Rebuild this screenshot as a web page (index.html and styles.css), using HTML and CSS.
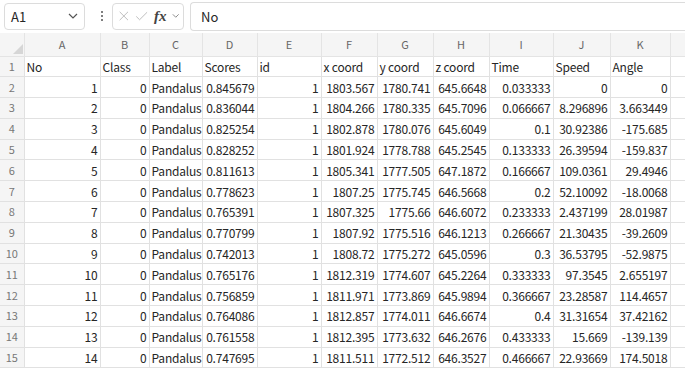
FILE: index.html
```html
<!DOCTYPE html>
<html lang="ja">
<head>
    <meta charset="UTF-8">
    <title>Sheet1</title>
    <link rel="stylesheet" href="styles.css">
</head>
<body>
    <div class="bar">
        <div class="name-box">
            <span>A1</span>
            <svg width="10" height="6" viewBox="0 0 10 6"><path d="M1 1l4 4 4-4" fill="none" stroke="#555" stroke-width="1.2"/></svg>
        </div>
        <div class="grip"><i></i><i></i><i></i></div>
        <div class="fx-box">
            <svg width="14" height="14" viewBox="0 0 14 14"><path d="M2 2l10 10M12 2L2 12" stroke="#b8b8b8" stroke-width="1.1"/></svg>
            <svg width="16" height="14" viewBox="0 0 16 14"><path d="M1.5 7.5l4 4 9-9" fill="none" stroke="#b8b8b8" stroke-width="1.1"/></svg>
            <span class="fx">fx</span>
            <svg width="9" height="6" viewBox="0 0 9 6"><path d="M1 1l3.5 3.5L8 1" fill="none" stroke="#777" stroke-width="1"/></svg>
        </div>
        <div class="formula">No</div>
    </div>
    <table class="sheet">
        <colgroup>
            <col style="width:24px"><col style="width:76px"><col style="width:49px"><col style="width:53px">
            <col style="width:55px"><col style="width:64px"><col style="width:56px"><col style="width:56px">
            <col style="width:56px"><col style="width:64px"><col style="width:57px"><col style="width:60px">
            <col style="width:15px">
        </colgroup>
        <thead>
            <tr>
                <th class="corner"><svg width="10" height="10" viewBox="0 0 10 10"><path d="M10 0v10H0z" fill="#d6d6d6"/></svg></th>
                <th>A</th><th>B</th><th>C</th><th>D</th><th>E</th><th>F</th>
                <th>G</th><th>H</th><th>I</th><th>J</th><th>K</th><th></th>
            </tr>
        </thead>
        <tbody id="rows"></tbody>
    </table>
    <script>
        var head = ['No','Class','Label','Scores','id','x coord','y coord','z coord','Time','Speed','Angle'];
        var data = [
            [1,0,'Pandalus','0.845679',1,'1803.567','1780.741','645.6648','0.033333','0','0'],
            [2,0,'Pandalus','0.836044',1,'1804.266','1780.335','645.7096','0.066667','8.296896','3.663449'],
            [3,0,'Pandalus','0.825254',1,'1802.878','1780.076','645.6049','0.1','30.92386','-175.685'],
            [4,0,'Pandalus','0.828252',1,'1801.924','1778.788','645.2545','0.133333','26.39594','-159.837'],
            [5,0,'Pandalus','0.811613',1,'1805.341','1777.505','647.1872','0.166667','109.0361','29.4946'],
            [6,0,'Pandalus','0.778623',1,'1807.25','1775.745','646.5668','0.2','52.10092','-18.0068'],
            [7,0,'Pandalus','0.765391',1,'1807.325','1775.66','646.6072','0.233333','2.437199','28.01987'],
            [8,0,'Pandalus','0.770799',1,'1807.92','1775.516','646.1213','0.266667','21.30435','-39.2609'],
            [9,0,'Pandalus','0.742013',1,'1808.72','1775.272','645.0596','0.3','36.53795','-52.9875'],
            [10,0,'Pandalus','0.765176',1,'1812.319','1774.607','645.2264','0.333333','97.3545','2.655197'],
            [11,0,'Pandalus','0.756859',1,'1811.971','1773.869','645.9894','0.366667','23.28587','114.4657'],
            [12,0,'Pandalus','0.764086',1,'1812.857','1774.011','646.6674','0.4','31.31654','37.42162'],
            [13,0,'Pandalus','0.761558',1,'1812.395','1773.632','646.2676','0.433333','15.669','-139.139'],
            [14,0,'Pandalus','0.747695',1,'1811.511','1772.512','646.3527','0.466667','22.93669','174.5018']
        ];
        var html = '<tr><th class="num">1</th>';
        for (var i = 0; i < head.length; i++) {
            html += '<td>' + head[i] + '</td>';
        }
        html += '<td></td></tr>';
        for (var r = 0; r < data.length; r++) {
            html += '<tr><th class="num">' + (r + 2) + '</th>';
            for (var c = 0; c < data[r].length; c++) {
                // 文字列は左寄せ、数値は右寄せ
                var cls = c == 2 ? '' : ' class="n"';
                html += '<td' + cls + '>' + data[r][c] + '</td>';
            }
            html += '<td></td></tr>';
        }
        document.getElementById('rows').innerHTML = html;
    </script>
</body>
</html>
```
FILE: styles.css
```css
*{
    margin: 0;
    padding: 0;
    box-sizing: border-box;
}
body{
    width: 685px;
    height: 369px;
    overflow: hidden;
    background: #fff;
    font-family: "Noto Sans CJK JP", "Noto Sans", sans-serif;
    font-size: 12px;
    color: #262626;
}
.bar{
    display: flex;
    align-items: center;
    height: 33px;
    padding: 2px 0 3px 4px;
}
.name-box{
    display: flex;
    align-items: center;
    justify-content: space-between;
    width: 81px;
    height: 27px;
    padding: 0 6px 0 6px;
    border: 1px solid #dcdcdc;
    border-radius: 4px;
    font-size: 13px;
}
.grip{
    display: flex;
    flex-direction: column;
    gap: 2px;
    margin: 0 9px 0 16px;
}
.grip i{
    width: 2px;
    height: 2px;
    background: #555;
    border-radius: 1px;
}
.fx-box{
    display: flex;
    align-items: center;
    gap: 5px;
    width: 72px;
    height: 27px;
    padding: 0 4px 0 5px;
    border: 1px solid #dcdcdc;
    border-radius: 4px;
}
.fx{
    font-family: "Liberation Serif", serif;
    font-style: italic;
    font-weight: bold;
    font-size: 15px;
    color: #444;
    margin-left: 1px;
}
.formula{
    flex: 1;
    height: 29px;
    margin-left: 6px;
    padding: 4px 10px;
    border: 1px solid #dcdcdc;
    border-right: none;
    border-radius: 4px 0 0 4px;
    font-size: 13px;
    line-height: 19px;
}
.sheet{
    border-collapse: collapse;
    table-layout: fixed;
    width: 685px;
}
.sheet th,.sheet td{
    height: 20.8px;
    padding: 0 2px 0 2px;
    border: 1px solid #e1e1e1;
    white-space: nowrap;
    line-height: 19px;
    letter-spacing: -0.2px;
}
.sheet thead th{
    height: 23px;
    background: #f5f5f5;
    color: #666;
    font-weight: normal;
    font-size: 11px;
    text-align: center;
    border-color: #e4e4e4;
    border-top: none;
    letter-spacing: 0;
}
.sheet thead th.corner{
    text-align: right;
    vertical-align: bottom;
    padding: 0 1px 2px 0;
    border-left: none;
}
.sheet thead th.corner svg{
    display: block;
    margin-left: auto;
}
.sheet th.num{
    background: #f5f5f5;
    color: #777;
    font-weight: normal;
    font-size: 11px;
    text-align: center;
    border-left: none;
    letter-spacing: 0;
}
.sheet td.n{
    text-align: right;
}
```
